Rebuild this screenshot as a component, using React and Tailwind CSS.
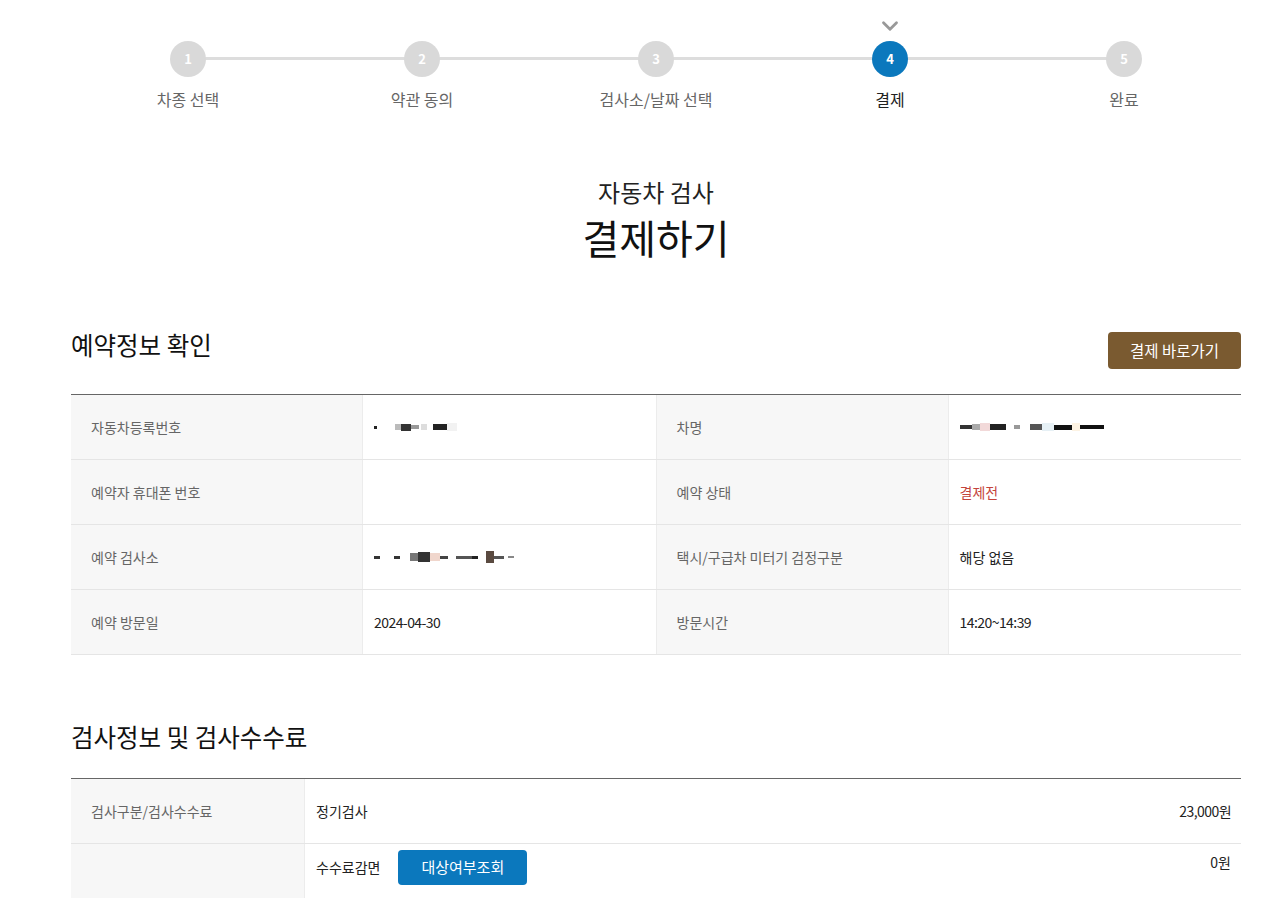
import { ChevronDown } from 'lucide-react';

const steps = ['차종 선택', '약관 동의', '검사소/날짜 선택', '결제', '완료'];
const current = 4;

// pixelated masked values
const Mosaic = ({ blocks }) => (
  <div className="flex items-center h-[14px]">
    {blocks.map((c, i) => (
      <span key={i} className={c} />
    ))}
  </div>
);

const carNo = [
  'w-[3px] h-[3px] bg-[#222] mr-[18px]',
  'w-[6px] h-[6px] bg-[#bbb]',
  'w-[10px] h-[7px] bg-[#333]',
  'w-[8px] h-[4px] bg-[#999] mr-[2px]',
  'w-[6px] h-[6px] bg-[#ddd] mr-[6px]',
  'w-[14px] h-[6px] bg-[#222]',
  'w-[10px] h-[8px] bg-[#f2f2f2]',
];
const carName = [
  'w-[12px] h-[4px] bg-[#333]',
  'w-[8px] h-[6px] bg-[#aaa]',
  'w-[10px] h-[8px] bg-[#f2d9d9]',
  'w-[16px] h-[6px] bg-[#222] mr-[8px]',
  'w-[6px] h-[4px] bg-[#999] mr-[10px]',
  'w-[12px] h-[6px] bg-[#555]',
  'w-[12px] h-[8px] bg-[#e6f0f5]',
  'w-[18px] h-[5px] bg-[#111]',
  'w-[8px] h-[8px] bg-[#fdf3e3]',
  'w-[24px] h-[4px] bg-[#111]',
];
const station = [
  'w-[6px] h-[3px] bg-[#333] mr-[14px]',
  'w-[6px] h-[3px] bg-[#333] mr-[10px]',
  'w-[8px] h-[8px] bg-[#777]',
  'w-[12px] h-[10px] bg-[#333]',
  'w-[10px] h-[8px] bg-[#f0d6cc]',
  'w-[8px] h-[3px] bg-[#444] mr-[8px]',
  'w-[16px] h-[3px] bg-[#555]',
  'w-[6px] h-[3px] bg-[#222] mr-[8px]',
  'w-[8px] h-[12px] bg-[#5a4a40]',
  'w-[10px] h-[3px] bg-[#555] mr-[4px]',
  'w-[6px] h-[2px] bg-[#888]',
];

const Th = ({ children, w = 'w-[292px]' }) => (
  <div className={`${w} shrink-0 bg-[#f7f7f7] px-5 flex items-center text-[14px] text-[#666] border-r border-[#ececec]`}>
    {children}
  </div>
);

const Td = ({ children, last }) => (
  <div className={`flex-1 px-[11px] flex items-center text-[14px] text-[#222] ${last ? '' : 'border-r border-[#ececec]'}`}>
    {children}
  </div>
);

const Row = ({ children }) => (
  <div className="flex h-[65px] border-b border-[#e5e5e5]">{children}</div>
);

export default function App() {
  return (
    <div className="min-h-screen bg-white font-['Noto_Sans_CJK_KR','Noto_Sans',sans-serif] text-[#222]">
      <div className="ml-[71px] w-[1170px]">
        {/* stepper */}
        <div className="relative grid grid-cols-5">
          <div className="absolute left-[117px] right-[117px] top-[57px] h-[3px] bg-[#dddddd]" />
          {steps.map((label, i) => {
            const n = i + 1;
            const active = n === current;
            return (
              <div key={label} className="relative flex flex-col items-center">
                <div className="h-[41px] flex items-end justify-center pb-[2px]">
                  {active && <ChevronDown className="w-[26px] h-[26px] text-[#999]" strokeWidth={2.6} />}
                </div>
                <div
                  className={`w-9 h-9 rounded-full flex items-center justify-center text-[13px] font-bold text-white ${
                    active ? 'bg-[#0b78bd]' : 'bg-[#d9d9d9]'
                  }`}
                >
                  {n}
                </div>
                <div className={`mt-[12px] text-[16px] leading-[20px] ${active ? 'text-[#222]' : 'text-[#666]'}`}>
                  {label}
                </div>
              </div>
            );
          })}
        </div>

        {/* title */}
        <div className="mt-[67px] text-center">
          <div className="text-[24px] leading-[32px] text-[#222]">자동차 검사</div>
          <h1 className="mt-[3px] text-[40px] leading-[52px] text-[#111]">결제하기</h1>
        </div>

        {/* 예약정보 확인 */}
        <div className="mt-[64px] flex items-start justify-between">
          <h2 className="text-[24.5px] leading-[36px] text-[#111]">예약정보 확인</h2>
          <button className="mt-[5px] h-[37px] px-[22px] rounded-[4px] bg-[#7a5a30] text-white text-[15.5px]">
            결제 바로가기
          </button>
        </div>

        <div className="mt-[25px] border-t border-[#666]">
          <Row>
            <Th>자동차등록번호</Th>
            <Td><Mosaic blocks={carNo} /></Td>
            <Th>차명</Th>
            <Td last><Mosaic blocks={carName} /></Td>
          </Row>
          <Row>
            <Th>예약자 휴대폰 번호</Th>
            <Td />
            <Th>예약 상태</Th>
            <Td last><span className="text-[#c4443c]">결제전</span></Td>
          </Row>
          <Row>
            <Th>예약 검사소</Th>
            <Td><Mosaic blocks={station} /></Td>
            <Th>택시/구급차 미터기 검정구분</Th>
            <Td last>해당 없음</Td>
          </Row>
          <Row>
            <Th>예약 방문일</Th>
            <Td><span className="tracking-[-0.04em]">2024-04-30</span></Td>
            <Th>방문시간</Th>
            <Td last><span className="tracking-[-0.04em]">14:20~14:39</span></Td>
          </Row>
        </div>

        {/* 검사정보 및 검사수수료 */}
        <h2 className="mt-[64px] text-[24.5px] leading-[36px] text-[#111]">검사정보 및 검사수수료</h2>

        <div className="mt-[23px] border-t border-[#666]">
          <div className="flex h-[65px] border-b border-[#e5e5e5]">
            <Th w="w-[234px]">검사구분/검사수수료</Th>
            <div className="flex-1 pl-[11px] pr-[10px] flex items-center justify-between text-[14px]">
              <span>정기검사</span>
              <span className="tracking-[-0.04em]">23,000원</span>
            </div>
          </div>
          <div className="flex h-[65px] border-b border-[#e5e5e5]">
            <Th w="w-[234px]" />
            <div className="flex-1 pl-[11px] pr-[10px] pt-[6px] flex items-start justify-between text-[14px]">
              <div className="flex items-center">
                <span>수수료감면</span>
                <button className="ml-[18px] h-[35px] px-[23px] rounded-[4px] bg-[#0b78bd] text-white text-[15px]">
                  대상여부조회
                </button>
              </div>
              <span className="mt-[2px]">0원</span>
            </div>
          </div>
        </div>
      </div>
    </div>
  );
}
